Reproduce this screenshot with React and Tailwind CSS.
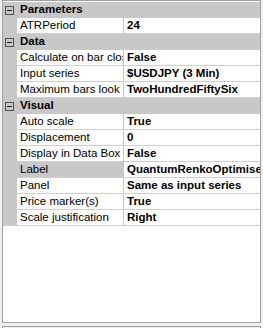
const GROUPS = [
  {
    name: 'Parameters',
    rows: [['ATRPeriod', '24']],
  },
  {
    name: 'Data',
    rows: [
      ['Calculate on bar close', 'False'],
      ['Input series', '$USDJPY (3 Min)'],
      ['Maximum bars look back', 'TwoHundredFiftySix'],
    ],
  },
  {
    name: 'Visual',
    rows: [
      ['Auto scale', 'True'],
      ['Displacement', '0'],
      ['Display in Data Box', 'False'],
      ['Label', 'QuantumRenkoOptimised', true],
      ['Panel', 'Same as input series'],
      ['Price marker(s)', 'True'],
      ['Scale justification', 'Right'],
    ],
  },
]

function Category({ name }) {
  return (
    <div className="flex h-[16px] items-center bg-[#c8c8c8]">
      <div className="ml-[2px] flex h-[9px] w-[9px] items-center justify-center border border-[#505050]">
        <div className="h-[1px] w-[5px] bg-[#202020]" />
      </div>
      <span className="ml-[6px] font-bold">{name}</span>
    </div>
  )
}

function Row({ label, value, selected }) {
  return (
    <div className="flex h-[16px]">
      <div className="w-[14px] shrink-0 bg-[#c8c8c8]" />
      <div
        className={`flex w-[106px] shrink-0 items-center overflow-hidden whitespace-nowrap border-b border-[#d0d0d0] pl-[3px] ${
          selected ? 'bg-[#c8c8c8]' : 'bg-white'
        }`}
      >
        {label}
      </div>
      <div className="w-[1px] shrink-0 bg-[#c8c8c8]" />
      <div className="flex flex-1 items-center overflow-hidden whitespace-nowrap border-b border-[#d0d0d0] pl-[3px] font-bold">
        {value}
      </div>
    </div>
  )
}

export default function App() {
  return (
    <div
      className="h-[328px] w-[263px] overflow-hidden bg-[#f0f0f0] pl-[2px] text-[11.5px] leading-none text-black"
      style={{ fontFamily: '"Liberation Sans", Arial, sans-serif' }}
    >
      <div className="h-[323px] w-[259px] overflow-hidden border border-[#a0a0a0] bg-white pt-[1px]">
        {GROUPS.map((g) => (
          <div key={g.name}>
            <Category name={g.name} />
            {g.rows.map(([label, value, selected]) => (
              <Row key={label} label={label} value={value} selected={selected} />
            ))}
          </div>
        ))}
      </div>
      <div className="mt-[3px] h-[10px] w-[259px] border border-[#a0a0a0] bg-[#f0f0f0]" />
    </div>
  )
}
